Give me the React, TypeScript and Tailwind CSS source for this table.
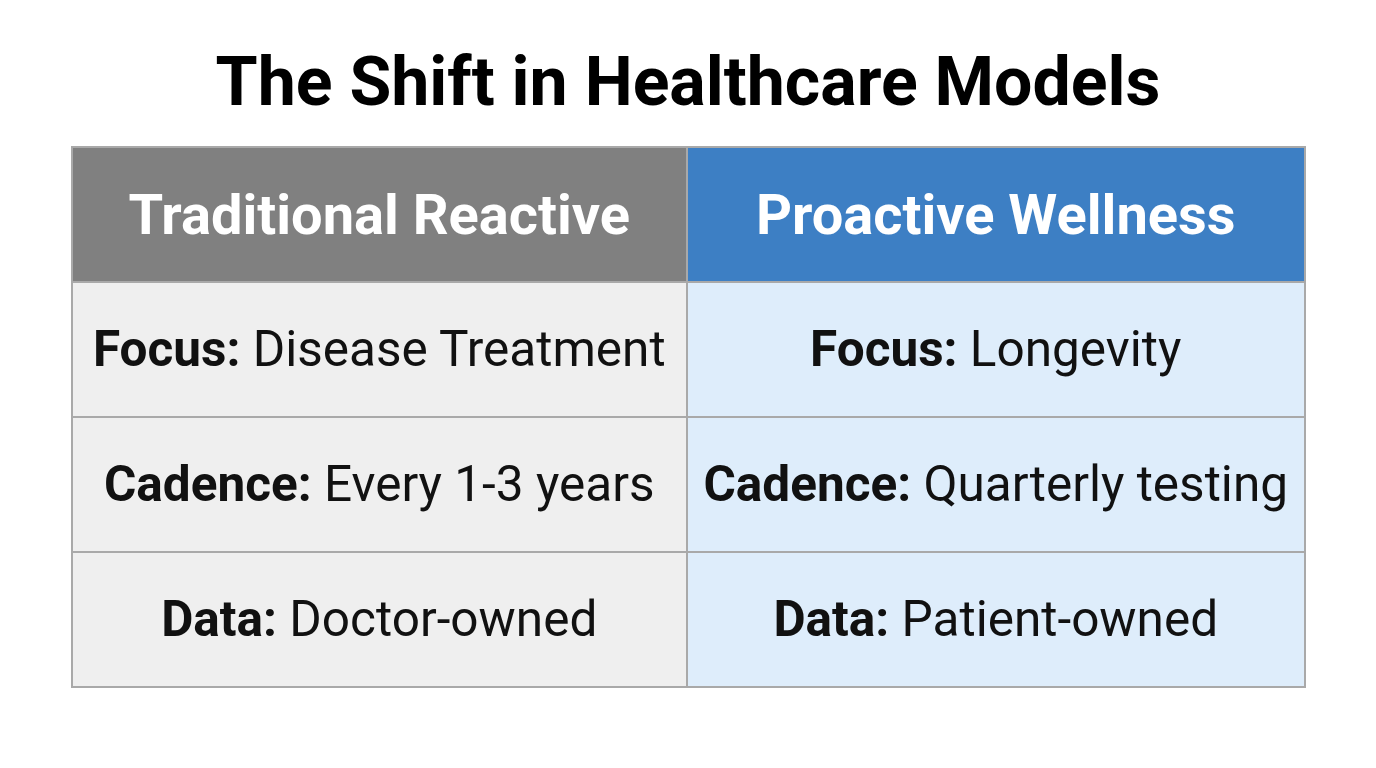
const rows = [
  { left: ["Focus:", "Disease Treatment"], right: ["Focus:", "Longevity"] },
  { left: ["Cadence:", "Every 1-3 years"], right: ["Cadence:", "Quarterly testing"] },
  { left: ["Data:", "Doctor-owned"], right: ["Data:", "Patient-owned"] },
];

const Cell = ({ label, value, tone }: { label: string; value: string; tone: "gray" | "blue" }) => (
  <div
    className={`flex h-[135px] items-center justify-center border-t-2 border-[#a9a9a9] ${
      tone === "gray" ? "bg-[#efefef]" : "bg-[#deedfb]"
    }`}
  >
    <p className="whitespace-nowrap text-[49.5px] text-[#111]">
      <span className="font-bold">{label}</span> {value}
    </p>
  </div>
);

export default function App() {
  return (
    <div
      className="flex min-h-screen flex-col items-center bg-white pt-[40px]"
      style={{ fontFamily: "Roboto, 'Liberation Sans', sans-serif" }}
    >
      <h1 className="text-[68px] font-bold leading-[84px] text-black">The Shift in Healthcare Models</h1>
      <div className="mt-[22px] grid w-[1235px] grid-cols-2 border-2 border-[#a9a9a9]">
        <div className="flex flex-col border-r-2 border-[#a9a9a9]">
          <div className="flex h-[133px] items-center justify-center bg-[#808080]">
            <h2 className="text-[56px] font-bold text-white">Traditional Reactive</h2>
          </div>
          {rows.map((r) => (
            <Cell key={r.left[0]} label={r.left[0]} value={r.left[1]} tone="gray" />
          ))}
        </div>
        <div className="flex flex-col">
          <div className="flex h-[133px] items-center justify-center bg-[#3d7fc4]">
            <h2 className="text-[56px] font-bold text-white">Proactive Wellness</h2>
          </div>
          {rows.map((r) => (
            <Cell key={r.right[0]} label={r.right[0]} value={r.right[1]} tone="blue" />
          ))}
        </div>
      </div>
    </div>
  );
}
